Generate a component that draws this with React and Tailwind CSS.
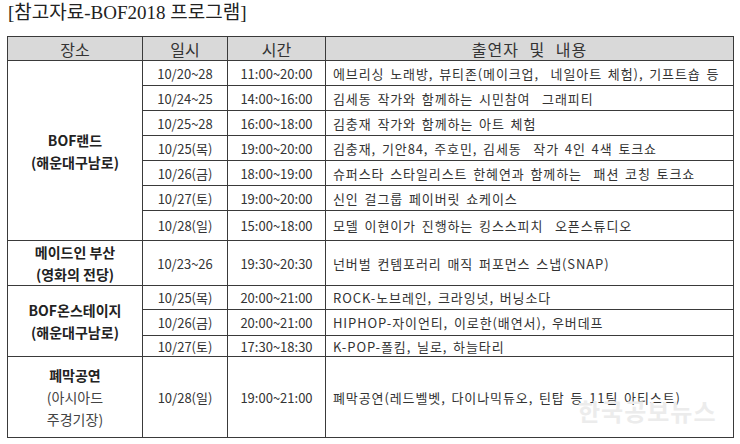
import React from 'react';

const groups = [
  {
    place: [
      { t: 'BOF랜드', b: true },
      { t: '(해운대구남로)', b: true },
    ],
    rows: [
      ['10/20~28', '11:00~20:00', '에브리싱 노래방, 뷰티존(메이크업,  네일아트 체험), 기프트숍 등', 25],
      ['10/24~25', '14:00~16:00', '김세동 작가와 함께하는 시민참여  그래피티', 25],
      ['10/25~28', '16:00~18:00', '김충재 작가와 함께하는 아트 체험', 25],
      ['10/25(목)', '19:00~20:00', '김충재, 기안84, 주호민, 김세동  작가 4인 4색 토크쇼', 25],
      ['10/26(금)', '18:00~19:00', '슈퍼스타 스타일리스트 한혜연과 함께하는  패션 코칭 토크쇼', 25],
      ['10/27(토)', '19:00~20:00', '신인 걸그룹 페이버릿 쇼케이스', 25],
      ['10/28(일)', '15:00~18:00', '모델 이현이가 진행하는 킹스스피치  오픈스튜디오', 30],
    ],
  },
  {
    place: [
      { t: '메이드인 부산', b: true },
      { t: '(영화의 전당)', b: true },
    ],
    rows: [['10/23~26', '19:30~20:30', '넌버벌 컨템포러리 매직 퍼포먼스 스냅(SNAP)', 43]],
  },
  {
    place: [
      { t: 'BOF온스테이지', b: true },
      { t: '(해운대구남로)', b: true },
    ],
    rows: [
      ['10/25(목)', '20:00~21:00', 'ROCK-노브레인, 크라잉넛, 버닝소다', 24],
      ['10/26(금)', '20:00~21:00', 'HIPHOP-자이언티, 이로한(배연서), 우버데프', 26],
      ['10/27(토)', '17:30~18:30', 'K-POP-폴킴, 닐로, 하늘타리', 21],
    ],
  },
  {
    place: [
      { t: '폐막공연', b: true },
      { t: '(아시아드', b: false },
      { t: '주경기장)', b: false },
    ],
    rows: [['10/28(일)', '19:00~21:00', '폐막공연(레드벨벳, 다이나믹듀오, 틴탑 등 11팀 아티스트)', 81]],
  },
];

const cell = 'border border-[#3a3a3a] p-0 align-middle';

export default function App() {
  return (
    <div
      className="relative w-[740px] h-[444px] bg-white overflow-hidden text-[#333]"
      style={{ fontFamily: '"Noto Sans CJK KR", "Noto Sans", sans-serif' }}
    >
      <div
        className="pl-[8px] pt-[2px] h-[36px] text-[19px] leading-[22px] text-[#222]"
        style={{ fontFamily: '"Liberation Serif", "Noto Sans CJK KR", serif' }}
      >
        [참고자료-BOF2018 프로그램]
      </div>

      <table className="ml-[7px] w-[726px] border-collapse table-fixed text-[13px] leading-none">
        <colgroup>
          <col className="w-[135px]" />
          <col className="w-[85px]" />
          <col className="w-[98px]" />
          <col className="w-[408px]" />
        </colgroup>
        <thead>
          <tr className="h-[24px] bg-[#d9d9d9] text-[16px] text-[#333]">
            <th className={`${cell} font-normal text-center`}>장소</th>
            <th className={`${cell} font-normal text-center`}>일시</th>
            <th className={`${cell} font-normal text-center`}>시간</th>
            <th className={`${cell} font-normal text-center tracking-[1px] [word-spacing:6px]`}>출연자 및 내용</th>
          </tr>
        </thead>
        <tbody>
          {groups.map((g, gi) =>
            g.rows.map((r, ri) => (
              <tr key={`${gi}-${ri}`} style={{ height: r[3] }}>
                {ri === 0 && (
                  <td rowSpan={g.rows.length} className={`${cell} text-center text-[14px] leading-[22px] text-[#222]`}>
                    {g.place.map((p, pi) => (
                      <div key={pi} className={p.b ? 'font-bold' : 'font-normal text-[#444]'}>
                        {p.t}
                      </div>
                    ))}
                  </td>
                )}
                <td className={`${cell} text-center`}>{r[0]}</td>
                <td className={`${cell} text-center`}>{r[1]}</td>
                <td className={`${cell} pl-[7px] whitespace-pre tracking-[0.9px] [word-spacing:2px]`}>{r[2]}</td>
              </tr>
            ))
          )}
        </tbody>
      </table>

      {/* watermark */}
      <div className="absolute left-[578px] top-[397px] text-[24px] leading-[28px] font-bold text-[#ececec] tracking-[1px] pointer-events-none">
        한국공보뉴스
      </div>
    </div>
  );
}
